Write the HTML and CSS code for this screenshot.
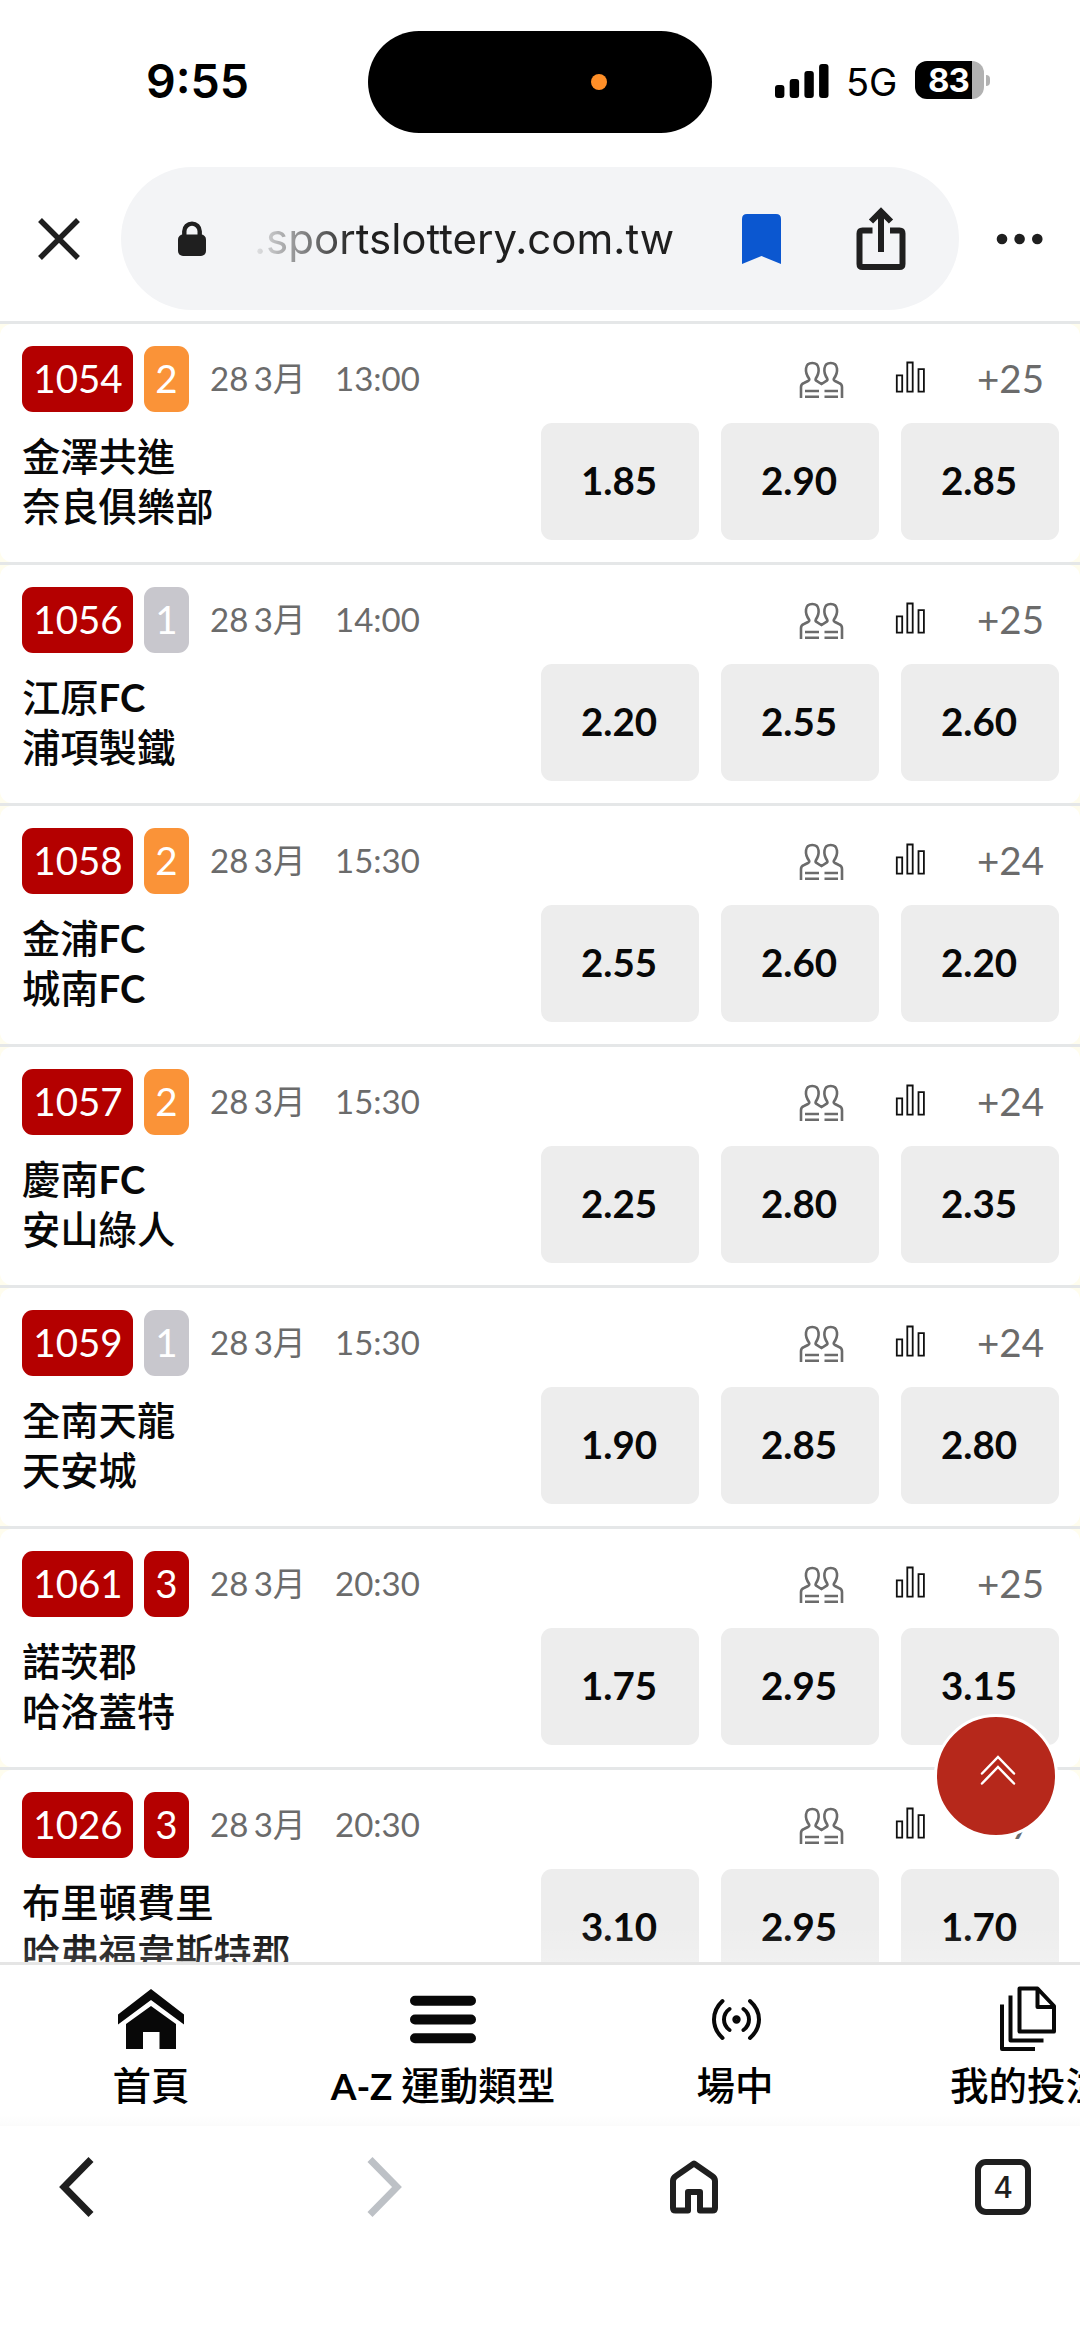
FILE: index.html
```html
<!DOCTYPE html>
<html lang="zh-Hant">
  <head>
    <meta charset="UTF-8" />
    <meta name="viewport" content="width=device-width, initial-scale=1.0" />
    <title>sportslottery.com.tw</title>
    <link rel="stylesheet" href="styles.css">
  </head>
  <body>
    <svg class="symbols">
      <symbol id="people" viewBox="0 0 46 38">
        <path d="M2 37V26Q2 23 5 22L9 20Q11 19 10 17.5C5.5 11 5.5 2 13.3 2C21 2 21 11 16.8 17.5Q16 19 18 20.2L22.5 23L27 20.2Q29 19 28.2 17.5C24 11 24 2 31.7 2C39.5 2 39.5 11 35 17.5Q34 19 36 20L40 22Q43 23 43 26V37M6 30H20M6 35.7H20M25.5 30H39M25.5 35.7H39" />
      </symbol>
      <symbol id="stats" viewBox="0 0 32 32">
        <path d="M1.8 14.3h5.4v16.4h-5.4zM12.3 1.5h5.4v29.2h-5.4zM23.5 8.2h5.4v22.5h-5.4z" />
      </symbol>
    </svg>

    <header class="status-bar">
      <span class="clock">9:55</span>
      <div class="island"><i></i></div>
      <svg class="signal" width="54" height="36" viewBox="0 0 54 36">
        <rect x="0" y="22" width="9.4" height="13" rx="3" />
        <rect x="14.7" y="16" width="9.4" height="19" rx="3" />
        <rect x="29.4" y="8" width="9.4" height="27" rx="3" />
        <rect x="44.1" y="1" width="9.4" height="34" rx="3" />
      </svg>
      <span class="network">5G</span>
      <div class="battery">83</div>
      <i class="battery-tip"></i>
    </header>

    <div class="address-bar">
      <svg class="close" width="42" height="42" viewBox="0 0 42 42"><path d="M2 2L40 40M40 2L2 40" /></svg>
      <div class="url-box">
        <svg class="lock" width="28" height="36" viewBox="0 0 28 36">
          <rect x="0" y="13.5" width="28" height="21.5" rx="5" />
          <path d="M6.3 16V10.3a7.7 7.7 0 0 1 15.4 0V16" />
        </svg>
        <span class="url">.sportslottery.com.tw</span>
        <svg class="bookmark" width="39" height="50" viewBox="0 0 39 50"><path d="M5 0H34Q39 0 39 5V50L19.500 42L0 50V5Q0 0 5 0Z" /></svg>
        <svg class="share" width="50" height="64" viewBox="0 0 50 64">
          <path d="M16.500 23.500H6.500Q3.500 23.500 3.500 26.500V57Q3.500 60 6.500 60H43.500Q46.500 60 46.500 57V26.500Q46.500 23.500 43.500 23.500H34" />
          <path d="M25 45V5M15 14.500L25 4.500L35 14.500" />
        </svg>
      </div>
      <svg class="more" width="48" height="12" viewBox="0 0 48 12"><circle cx="6" cy="6" r="5.3" /><circle cx="23.600" cy="6" r="5.3" /><circle cx="41.300" cy="6" r="5.3" /></svg>
    </div>

    <main>
      <section class="match">
        <div class="match-body">
          <div class="match-head">
            <span class="code">1054</span><span class="min orange">2</span>
            <span class="date">28 3月</span><span class="time">13:00</span>
            <svg class="people"><use href="#people" /></svg><svg class="stats"><use href="#stats" /></svg>
            <span class="more-bets">+25</span>
          </div>
          <div class="match-main">
            <div class="teams">金澤共進<br />奈良俱樂部</div>
            <button>1.85</button><button>2.90</button><button>2.85</button>
          </div>
        </div>
      </section>
      <section class="match">
        <div class="match-body">
          <div class="match-head">
            <span class="code">1056</span><span class="min gray">1</span>
            <span class="date">28 3月</span><span class="time">14:00</span>
            <svg class="people"><use href="#people" /></svg><svg class="stats"><use href="#stats" /></svg>
            <span class="more-bets">+25</span>
          </div>
          <div class="match-main">
            <div class="teams">江原<b>FC</b><br />浦項製鐵</div>
            <button>2.20</button><button>2.55</button><button>2.60</button>
          </div>
        </div>
      </section>
      <section class="match">
        <div class="match-body">
          <div class="match-head">
            <span class="code">1058</span><span class="min orange">2</span>
            <span class="date">28 3月</span><span class="time">15:30</span>
            <svg class="people"><use href="#people" /></svg><svg class="stats"><use href="#stats" /></svg>
            <span class="more-bets">+24</span>
          </div>
          <div class="match-main">
            <div class="teams">金浦<b>FC</b><br />城南<b>FC</b></div>
            <button>2.55</button><button>2.60</button><button>2.20</button>
          </div>
        </div>
      </section>
      <section class="match">
        <div class="match-body">
          <div class="match-head">
            <span class="code">1057</span><span class="min orange">2</span>
            <span class="date">28 3月</span><span class="time">15:30</span>
            <svg class="people"><use href="#people" /></svg><svg class="stats"><use href="#stats" /></svg>
            <span class="more-bets">+24</span>
          </div>
          <div class="match-main">
            <div class="teams">慶南<b>FC</b><br />安山綠人</div>
            <button>2.25</button><button>2.80</button><button>2.35</button>
          </div>
        </div>
      </section>
      <section class="match">
        <div class="match-body">
          <div class="match-head">
            <span class="code">1059</span><span class="min gray">1</span>
            <span class="date">28 3月</span><span class="time">15:30</span>
            <svg class="people"><use href="#people" /></svg><svg class="stats"><use href="#stats" /></svg>
            <span class="more-bets">+24</span>
          </div>
          <div class="match-main">
            <div class="teams">全南天龍<br />天安城</div>
            <button>1.90</button><button>2.85</button><button>2.80</button>
          </div>
        </div>
      </section>
      <section class="match">
        <div class="match-body">
          <div class="match-head">
            <span class="code">1061</span><span class="min">3</span>
            <span class="date">28 3月</span><span class="time">20:30</span>
            <svg class="people"><use href="#people" /></svg><svg class="stats"><use href="#stats" /></svg>
            <span class="more-bets">+25</span>
          </div>
          <div class="match-main">
            <div class="teams">諾茨郡<br />哈洛蓋特</div>
            <button>1.75</button><button>2.95</button><button>3.15</button>
          </div>
        </div>
      </section>
      <section class="match">
        <div class="match-body">
          <div class="match-head">
            <span class="code">1026</span><span class="min">3</span>
            <span class="date">28 3月</span><span class="time">20:30</span>
            <svg class="people"><use href="#people" /></svg><svg class="stats"><use href="#stats" /></svg>
            <span class="more-bets">+7</span>
          </div>
          <div class="match-main">
            <div class="teams">布里頓費里<br />哈弗福韋斯特郡</div>
            <button>3.10</button><button>2.95</button><button>1.70</button>
          </div>
        </div>
      </section>
      <a class="to-top" href="#">
        <svg width="36" height="30" viewBox="0 0 36 30"><path d="M2 18.500L18 2L34 18.500M2 28.500L18 12L34 28.500" /></svg>
      </a>
    </main>

    <nav class="site-nav">
      <a>
        <svg width="66" height="66" viewBox="0 0 66 66"><path d="M33 3L66 28.500V38.500L33 14L0 38.500V28.500ZM33 20L58 38V63H41.500V46H25V63H8V38Z" /></svg>
        首頁
      </a>
      <a>
        <svg width="66" height="66" viewBox="0 0 66 66"><path d="M5 14.700H61M5 33.500H61M5 52.300H61" stroke="#080808" stroke-width="10" stroke-linecap="round" /></svg>
        <span><b>A-Z</b> 運動類型</span>
      </a>
      <a>
        <svg width="66" height="66" viewBox="0 0 66 66" class="line-icon"><circle cx="34.500" cy="33.500" r="2.200" /><path d="M20.500 15Q12 23 12 33.500T20.500 52M48 15Q57 23 57 33.500T48 52M27.500 23Q22 27 22 33.500T27.500 44M41.500 23Q47 27 47 33.500T41.500 44" /></svg>
        場中
      </a>
      <a>
        <svg width="66" height="66" viewBox="0 0 66 66" class="doc-icon"><path d="M25.500 2.500H43.500L60 20V45.500H25.500ZM43.500 2.500V21H60M16.500 9.500V54.500H49.500M8 18.500V63H41" /></svg>
        我的投注
      </a>
    </nav>

    <footer class="toolbar">
      <svg width="36" height="60" viewBox="0 0 36 60"><path d="M33 2.500L6 30L33 57.500" /></svg>
      <svg class="forward" width="36" height="60" viewBox="0 0 36 60"><path d="M3 2.500L30 30L3 57.500" /></svg>
      <svg class="home" width="50" height="54" viewBox="0 0 50 54"><path d="M25 3.500L43 16Q46 18 46 21V48Q46 50.500 43.500 50.500H31V32H19V50.500H6.500Q4 50.500 4 48V21Q4 18 7 16Z" /></svg>
      <span class="tabs">4</span>
    </footer>
  </body>
</html>
```

FILE: styles.css
```css
* {
  box-sizing: border-box;
}
body {
  margin: 0;
  width: 1080px;
  height: 2341px;
  overflow: hidden;
  display: flex;
  flex-direction: column;
  background-color: #fff;
  color: #080808;
  font-family: Lato, "Noto Sans CJK TC", sans-serif;
}
svg {
  flex: none;
  display: block;
  fill: none;
}
.symbols {
  position: absolute;
  width: 0;
  height: 0;
}

/* phone status bar */
.status-bar {
  flex: none;
  height: 163px;
  display: flex;
  align-items: center;
  color: #000;
  font-family: Inter, sans-serif;
}
.clock {
  width: 222px;
  margin-left: 146px;
  font-size: 46.5px;
  font-weight: 600;
  line-height: 60px;
  padding-bottom: 2px;
}
.island {
  width: 344px;
  height: 102px;
  border-radius: 51px;
  background-color: #000;
  padding: 43px 0 0 223px;
}
.island i {
  display: block;
  width: 16px;
  height: 16px;
  border-radius: 50%;
  background-color: #ff8f28;
}
.signal {
  margin: -2px 0 0 63px;
  fill: #000;
}
.network {
  width: 69px;
  margin-left: 17px;
  font-size: 38px;
}
.battery {
  width: 69px;
  height: 38px;
  margin-top: -3px;
  border-radius: 12px;
  background: linear-gradient(to right, #000 57px, #b2b2b2 57px);
  color: #fff;
  font-size: 33px;
  font-weight: 700;
  line-height: 38px;
  padding-left: 13px;
  letter-spacing: -1px;
}
.battery-tip {
  width: 4px;
  height: 11px;
  margin: -3px 0 0 2px;
  border-radius: 0 4px 4px 0;
  background-color: #b2b2b2;
}

/* browser address bar */
.address-bar {
  flex: none;
  height: 158px;
  padding: 4px 0 0 38px;
  display: flex;
  align-items: flex-start;
}
.close {
  margin-top: 51px;
  stroke: #1f1f1f;
  stroke-width: 5.5;
}
.url-box {
  width: 838px;
  height: 143px;
  margin-left: 41px;
  padding-left: 57px;
  border-radius: 72px;
  background-color: #f3f4f6;
  display: flex;
  align-items: center;
}
.lock {
  fill: #1f1f1f;
}
.lock path {
  fill: none;
  stroke: #1f1f1f;
  stroke-width: 4.4;
}
.url {
  width: 486px;
  padding-left: 48px;
  font-family: Inter, sans-serif;
  font-size: 42px;
  white-space: nowrap;
  color: transparent;
  background: linear-gradient(to right, #f3f4f6 40px, #1f1f1f 150px);
  background-clip: text;
  -webkit-background-clip: text;
}
.bookmark {
  margin-left: 50px;
  fill: #0b57d0;
}
.share {
  margin-left: 75px;
  stroke: #1f1f1f;
  stroke-width: 6;
}
.more {
  margin: 66px 0 0 37px;
  fill: #1f1f1f;
}

/* match list */
main {
  flex: none;
  height: 1641px;
  overflow: hidden;
  position: relative;
  background-color: #fffdee;
}
main::after {
  content: "";
  position: absolute;
  left: 0;
  right: 0;
  bottom: 0;
  height: 36px;
  background: linear-gradient(rgba(255, 255, 255, 0), rgba(255, 255, 255, 0.22));
}
.match {
  height: 241px;
  border-top: 3px solid #e5e7e8;
}
.match-body {
  height: 238px;
  padding: 22px 22px 0;
  border-radius: 12px;
  background-color: #fff;
}
.match-head {
  height: 66px;
  display: flex;
  align-items: center;
  color: #6b6b6b;
}
.code,
.min {
  height: 66px;
  border-radius: 11px;
  background-color: #b40000;
  color: #fff;
  font-size: 38.5px;
  line-height: 65px;
  text-align: center;
}
.code {
  width: 111px;
  padding-left: 1px;
}
.min {
  width: 45px;
  margin-left: 11px;
}
.min.orange {
  background-color: #fa9338;
}
.min.gray {
  background-color: #c8c7cd;
}
.date,
.time {
  font-size: 33px;
  line-height: 60px;
  white-space: nowrap;
  padding-bottom: 2px;
}
.date {
  width: 125px;
  margin-left: 21px;
  word-spacing: -3px;
}
.time {
  width: 464px;
}
.people {
  width: 46px;
  height: 38px;
  margin-top: 2px;
  stroke: #6b6b6b;
  stroke-width: 2.6;
}
.stats {
  width: 32px;
  height: 32px;
  margin: -4px 0 0 50px;
  stroke: #111;
  stroke-width: 1.8;
}
.more-bets {
  width: 67px;
  margin-left: 50px;
  padding-bottom: 2px;
  text-align: center;
  font-size: 38.5px;
}
.match-main {
  display: flex;
  margin-top: 11px;
}
.teams {
  flex: none;
  width: 519px;
  height: 117px;
  padding-top: 8px;
  font-size: 38.3px;
  font-weight: 500;
  line-height: 50px;
}
button {
  width: 158px;
  height: 117px;
  margin: 0 22px 0 0;
  padding: 0 2px 3px 0;
  flex: none;
  border: none;
  border-radius: 11px;
  background-color: #ededed;
  color: #080808;
  font: 700 38.5px Lato, sans-serif;
}
button:last-child {
  margin-right: 0;
}
.to-top {
  position: absolute;
  top: 1393px;
  left: 934px;
  width: 124px;
  height: 124px;
  border: 3px solid #fff;
  border-radius: 50%;
  background-color: #b6281b;
  display: flex;
  justify-content: center;
  padding: 38px 0 0 3px;
}
.to-top svg {
  stroke: #fff;
  stroke-width: 2.5;
  stroke-linecap: round;
}

/* site navigation */
.site-nav {
  flex: none;
  height: 164px;
  border-top: 3px solid #e5e5e5;
  padding: 21px 0 0 5px;
  display: flex;
  background: linear-gradient(#fff 150px, #fbfbfb);
}
.site-nav a {
  flex: none;
  width: 292px;
  display: flex;
  flex-direction: column;
  align-items: center;
  font-size: 38.5px;
  font-weight: 500;
  line-height: 66px;
  white-space: nowrap;
  word-spacing: -1px;
  color: #000;
}
.site-nav b {
  font-size: 37px;
}
.site-nav svg {
  fill: #080808;
}
.site-nav .line-icon,
.site-nav .doc-icon {
  fill: none;
  stroke: #080808;
  stroke-width: 4;
  stroke-linecap: round;
}
.site-nav .doc-icon {
  stroke-linecap: butt;
  stroke-linejoin: round;
}

/* browser toolbar */
.toolbar {
  flex: none;
  height: 122px;
  padding-left: 58px;
  display: flex;
  align-items: center;
}
.toolbar svg {
  stroke: #1f1f1f;
  stroke-width: 7;
}
.toolbar .forward {
  margin-left: 273px;
  stroke: #bdc1c6;
}
.toolbar .home {
  margin-left: 266px;
  stroke-width: 6;
  stroke-linejoin: round;
}
.tabs {
  width: 56px;
  height: 56px;
  margin-left: 256px;
  border: 6px solid #1f1f1f;
  border-radius: 11px;
  color: #1f1f1f;
  font: 500 30px/45px Inter, sans-serif;
  text-align: center;
}
```
